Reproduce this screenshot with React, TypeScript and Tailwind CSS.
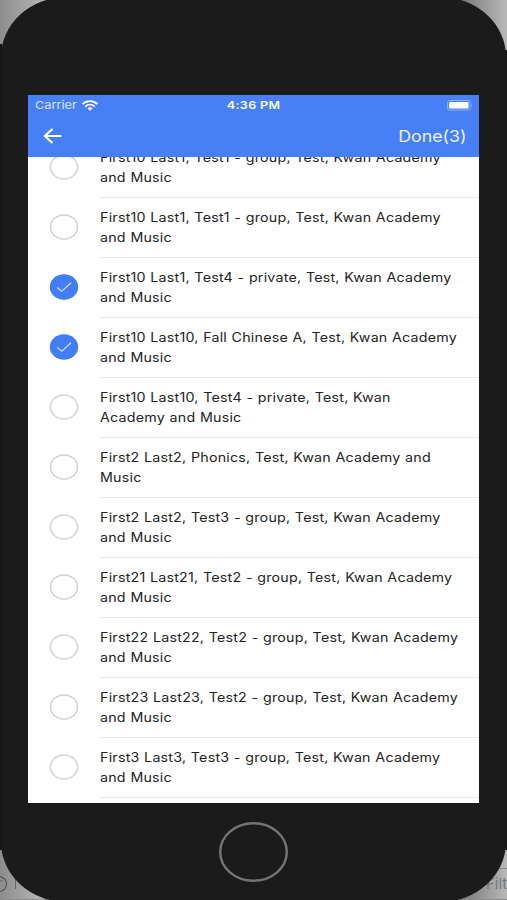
import React from "react";

type Row = { first: string; second: string; checked?: boolean };

const rows: Row[] = [
  { first: "First10 Last1, Test1 - group, Test, Kwan Academy", second: "and Music" },
  { first: "First10 Last1, Test1 - group, Test, Kwan Academy", second: "and Music" },
  { first: "First10 Last1, Test4 - private, Test, Kwan Academy", second: "and Music", checked: true },
  { first: "First10 Last10, Fall Chinese A, Test, Kwan Academy", second: "and Music", checked: true },
  { first: "First10 Last10, Test4 - private, Test, Kwan", second: "Academy and Music" },
  { first: "First2 Last2, Phonics, Test, Kwan Academy and", second: "Music" },
  { first: "First2 Last2, Test3 - group, Test, Kwan Academy", second: "and Music" },
  { first: "First21 Last21, Test2 - group, Test, Kwan Academy", second: "and Music" },
  { first: "First22 Last22, Test2 - group, Test, Kwan Academy", second: "and Music" },
  { first: "First23 Last23, Test2 - group, Test, Kwan Academy", second: "and Music" },
  { first: "First3 Last3, Test3 - group, Test, Kwan Academy", second: "and Music" },
];

function Check({ checked }: { checked?: boolean }) {
  return (
    <svg className="block h-7 w-[30px]" viewBox="0 0 30 28" fill="none">
      {checked ? (
        <>
          <ellipse cx="15" cy="14" rx="14.2" ry="12.7" fill="#437df5" />
          <path d="M8.2 14.4L12.8 18.2L22 9.8" stroke="#c5d8ff" strokeWidth="1.3" />
        </>
      ) : (
        <ellipse cx="15" cy="14" rx="13.6" ry="12.1" stroke="#d2d2d4" strokeWidth="1.5" />
      )}
    </svg>
  );
}

function ListRow({ row }: { row: Row }) {
  return (
    <li className="flex h-[60px] shrink-0">
      <div className="w-[72px] shrink-0 pt-[15px] pl-[21px]">
        <Check checked={row.checked} />
      </div>
      <div className="flex-1 border-b border-[#e9e9ea] pt-[10px] text-[12.5px] leading-5 tracking-[0.015em] whitespace-nowrap text-[#242424] [word-spacing:0.3px]">
        <div className="w-max origin-left scale-x-[1.141]">{row.first}</div>
        <div className="w-max origin-left scale-x-[1.141]">{row.second}</div>
      </div>
    </li>
  );
}

export default function App() {
  return (
    <div className="relative h-[900px] w-[507px] overflow-hidden bg-[linear-gradient(90deg,#8c8c8c_0px,#b4b4b4_40px,#707070_455px,#b8b8b8_507px)] font-['Inter','Liberation_Sans',sans-serif]">
      <svg className="absolute inset-0 h-full w-full" viewBox="0 0 507 900" fill="none">
        <path d="M0 44V850M507 50V850" stroke="#161616" strokeWidth="4" />
        <circle cx="-1" cy="884" r="7.5" stroke="#555" strokeWidth="1.2" />
        <path d="M-2 881H3M15.5 878V889" stroke="#666" />
        <path d="M0 899.5H60M450 899.5H507M498 868.5H507" stroke="#8a8a8a" />
        <text x="486" y="889" fontSize="15" fill="#777" fontFamily="Inter">Filt</text>
      </svg>
      <div className="relative flex h-[900px] flex-col items-center">
        <div className="absolute -top-[3px] left-px h-[905px] w-[505px] rounded-[66px/60px] bg-[#1b1b1b]" />
        <main className="relative mt-[95px] flex h-[708px] w-[451px] flex-col overflow-hidden bg-white">
          <header className="relative z-10 h-[62px] shrink-0 bg-[#4780f6] text-white">
            <div className="flex h-[21px] items-center justify-between pr-[5px] pl-[7px] text-[11px]">
              <div className="flex w-[120px] items-center text-[#d9e5ff]">
                <span className="w-[43px] origin-left scale-x-[1.16] whitespace-nowrap">Carrier</span>
                <svg className="ml-[4px] h-[11px] w-4" viewBox="0 0 16 11" fill="none" stroke="white" strokeWidth="1.9">
                  <path d="M.6 4.1C4.8.1 11.2.1 15.4 4.1M3.2 6.6C6 4 10 4 12.8 6.6" />
                  <path d="M5.4 8.2C7 6.8 9 6.8 10.6 8.2L8 10.8Z" fill="white" stroke="none" />
                </svg>
              </div>
              <span className="mr-[2px] origin-center scale-x-[1.14] font-semibold tracking-[0.03em] whitespace-nowrap">4:36 PM</span>
              <div className="flex w-[120px] justify-end">
                <svg className="h-[11px] w-[27px]" viewBox="0 0 27 11">
                  <rect x=".5" y=".5" width="22.5" height="9.5" rx="2" fill="none" stroke="#8eb0fb" />
                  <rect x="2" y="2" width="19.5" height="6.5" rx="1" fill="white" />
                  <path d="M24.3 3.5Q26 5.2 24.3 7Z" fill="#8eb0fb" />
                </svg>
              </div>
            </div>
            <div className="flex h-[40px] items-center justify-between pr-[13px] pl-[15px]">
              <svg className="h-[18px] w-[19px]" viewBox="0 0 19 18" fill="none" stroke="white" strokeWidth="2.2">
                <path d="M18.5 9H1.7M9.5 2L1.7 9L9.5 16" strokeLinejoin="round" />
              </svg>
              <span className="origin-right scale-x-[1.11] text-base whitespace-nowrap text-[#edf3ff]">Done(3)</span>
            </div>
          </header>
          <ul className="-mt-[19px] flex flex-col">
            {rows.map((row, i) => (
              <ListRow key={i} row={row} />
            ))}
            <li className="ml-[72px] h-2" />
          </ul>
        </main>
        <svg className="relative mt-[18px] h-[62px] w-[70px] -translate-x-[0.5px]" viewBox="0 0 70 62" fill="none">
          <ellipse cx="35" cy="31" rx="33.3" ry="28.7" stroke="#747474" strokeWidth="2.4" />
        </svg>
      </div>
    </div>
  );
}
